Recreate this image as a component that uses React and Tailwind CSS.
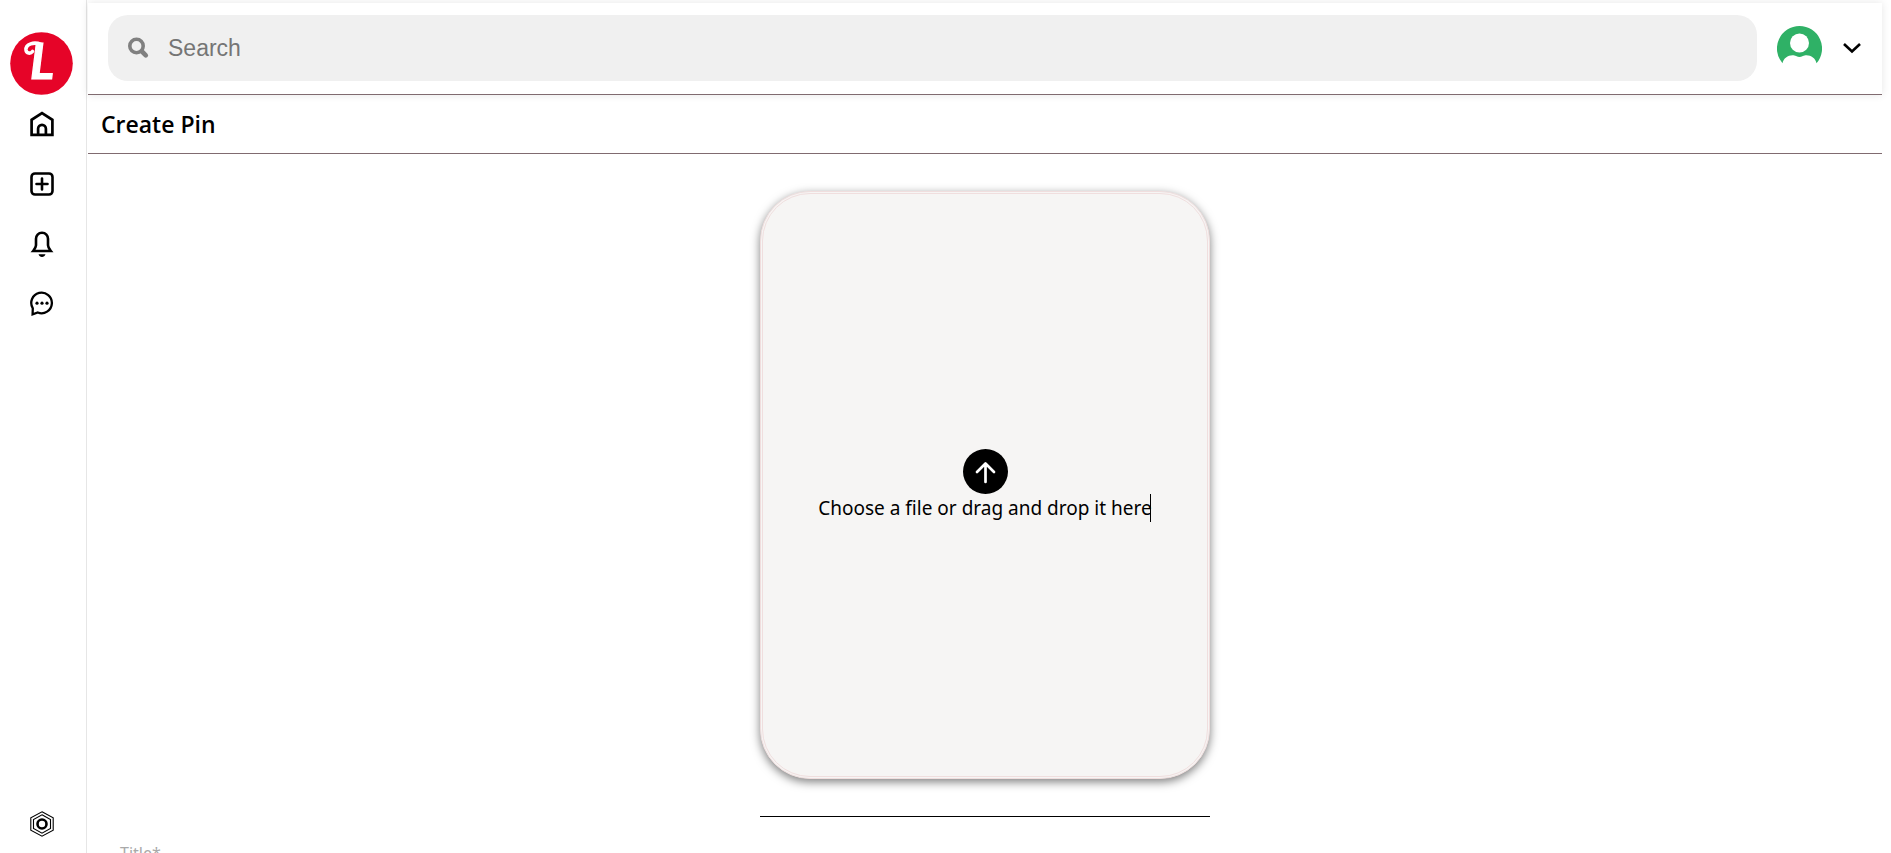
import React from "react";

function Logo() {
  return (
    <svg viewBox="0 0 63 63" className="size-[63px]" role="img" aria-label="Home logo">
      <circle cx="31.5" cy="31.5" r="31.3" fill="#e60428" />
      <text x="20" y="47" fill="#fff" stroke="#fff" strokeWidth="1.200" fontFamily="Lato, sans-serif" fontWeight="700" fontStyle="italic" fontSize="50">L</text>
      <path d="M31 12.500C24 9.500 15.500 12 16 18c.4 3.500 4.500 4 6.500 1.500" fill="none" stroke="#fff" strokeWidth="3.600" strokeLinecap="round" />
    </svg>
  );
}

function HomeIcon() {
  return (
    <svg viewBox="0 0 24 26" className="h-[26px] w-6" fill="none" stroke="#000" strokeWidth="2.700">
      <path d="M1.600 23.800V8.800L12 2.200l10.400 6.600v15z" />
      <path d="M8.100 23.800v-6a3.900 3.900 0 0 1 7.800 0v6" />
    </svg>
  );
}

function PlusIcon() {
  return (
    <svg viewBox="0 0 24 24" className="size-6" fill="none" stroke="#000" strokeWidth="2.600" strokeLinecap="round">
      <rect x="1.500" y="1.500" width="21" height="21" rx="3.500" />
      <path d="M12 6.500v11M6.500 12h11" />
    </svg>
  );
}

function BellIcon() {
  return (
    <svg viewBox="0 0 24 28" className="h-7 w-6">
      <path d="M12 2.800c-3.700 0-6 2.700-6 6v6.500c0 2-1.300 3.800-2.800 5.700h17.600c-1.500-1.900-2.800-3.700-2.800-5.700V8.800c0-3.300-2.300-6-6-6z" fill="none" stroke="#000" strokeWidth="2.600" />
      <path d="M8.500 24.200h7c-.7 1.700-1.800 2.700-3.500 2.700s-2.800-1-3.500-2.700z" />
    </svg>
  );
}

function ChatIcon() {
  return (
    <svg viewBox="0 0 24 26" className="h-[26px] w-6">
      <path d="M2.800 17.300A10.300 10.300 0 1 1 7.800 21.500L2.600 23.300z" fill="none" stroke="#000" strokeWidth="2.300" />
      <circle cx="7" cy="12.200" r="1.600" />
      <circle cx="12" cy="12.200" r="1.600" />
      <circle cx="17" cy="12.200" r="1.600" />
    </svg>
  );
}

function SettingsIcon() {
  return (
    <svg viewBox="0 0 24 26" className="h-[26px] w-6" fill="none" stroke="#000">
      <path d="M12 .8l11.200 6v12.400L12 25.200.8 19.200V6.800z" strokeWidth="1.100" />
      <path d="M12 3.800l8.500 4.700v9L12 22.200l-8.500-4.700v-9z" strokeWidth="1.100" />
      <circle cx="12" cy="13" r="4.500" strokeWidth="2.600" />
    </svg>
  );
}

function SearchIcon() {
  return (
    <svg viewBox="0 0 22 22" className="size-[22px]" fill="none" stroke="#808080">
      <circle cx="8.500" cy="9" r="6.700" strokeWidth="3.600" />
      <path d="M14 14.500l3.800 3.800" strokeWidth="4.600" strokeLinecap="round" />
    </svg>
  );
}

function Avatar() {
  return (
    <svg viewBox="0 0 45 45" className="size-[45px]">
      <path d="M22.500 0A22.500 22.500 0 0 1 39.500 37.300C38.500 32 33.500 28.800 28.500 29.300 25.500 29.600 25 31 22.500 31S19.500 29.600 16.500 29.300C11.500 28.800 6.500 32 5.500 37.300A22.500 22.500 0 0 1 22.500 0z" fill="#2fb166" />
      <circle cx="22.500" cy="17" r="9.500" fill="#fff" />
    </svg>
  );
}

const navItems = [
  { label: "Home", Icon: HomeIcon },
  { label: "Create", Icon: PlusIcon },
  { label: "Notifications", Icon: BellIcon },
  { label: "Messages", Icon: ChatIcon },
];

export default function App() {
  return (
    <div className="flex h-screen overflow-hidden bg-white font-['Noto_Sans',sans-serif] text-black">
      <aside className="flex w-[87px] shrink-0 flex-col border-r border-[#e6e6e6] pt-8 pr-[2px] pb-4">
        <a href="#home" className="flex justify-center pr-[2px]">
          <Logo />
        </a>
        <nav className="-mt-px flex flex-col">
          {navItems.map(({ label, Icon }) => (
            <a key={label} href={"#" + label.toLowerCase()} aria-label={label} className="flex h-[60px] items-center justify-center">
              <Icon />
            </a>
          ))}
        </nav>
        <a href="#settings" aria-label="Settings" className="mt-auto flex justify-center">
          <SettingsIcon />
        </a>
      </aside>

      <div className="flex min-w-0 grow flex-col pt-[3px] pr-[9px] pl-px">
        <header className="flex h-[92px] shrink-0 items-center border-b border-[#806b70] px-5 pb-px shadow-[0_0_8px_rgba(0,0,0,0.1)]">
          <label className="flex h-[66px] min-w-0 grow items-center gap-[18px] rounded-[20px] bg-[#f0f0f0] px-5">
            <SearchIcon />
            <input
              type="search"
              aria-label="Search"
              placeholder="Search"
              className="min-w-0 grow bg-transparent font-['Liberation_Sans',sans-serif] text-[23px] leading-7 outline-none placeholder:text-[#757575]"
            />
          </label>
          <button type="button" aria-label="Profile" className="ml-5">
            <Avatar />
          </button>
          <button type="button" aria-label="Account menu" className="ml-5 flex size-5 items-center justify-center">
            <svg viewBox="0 0 18 12" className="h-3 w-[18px]" fill="none" stroke="#000" strokeWidth="2.600">
              <path d="M1 2l8 7.500L17 2" />
            </svg>
          </button>
        </header>

        <div className="flex h-[59px] shrink-0 items-center border-b border-[#806b70] px-[13px]">
          <h1 className="font-['Open_Sans',sans-serif] text-[23px] leading-8 font-semibold">Create Pin</h1>
        </div>

        <main className="flex min-h-0 grow flex-col overflow-hidden pt-[37px]">
          <div className="flex w-[450px] shrink-0 flex-col gap-[37px] self-center">
            <label className="flex h-[588px] cursor-pointer flex-col items-center justify-center rounded-[50px] border-[3px] border-double border-[#f0dede] bg-[#f6f5f4] shadow-[0_3px_10px_rgba(0,0,0,0.5)]">
              <input type="file" className="sr-only" />
              <svg viewBox="0 0 45 45" className="size-[45px]">
                <circle cx="22.500" cy="22.500" r="22.500" />
                <path d="M22.500 33V14.500M14 23l8.500-8.500L31 23" fill="none" stroke="#fff" strokeWidth="2.700" strokeLinecap="round" strokeLinejoin="round" />
              </svg>
              <span className="relative text-[19px] leading-7 after:absolute after:inset-y-0 after:right-px after:w-px after:bg-black">Choose a file or drag and drop it here</span>
            </label>
            <hr className="border-black" />
          </div>
          <label htmlFor="pin-title" className="mt-6 ml-8 self-start text-base leading-6 text-[#a9a9a9]">Title*</label>
          <input id="pin-title" type="text" className="mx-8 h-10 shrink-0 border border-[#a9a9a9]" />
        </main>
      </div>
    </div>
  );
}
